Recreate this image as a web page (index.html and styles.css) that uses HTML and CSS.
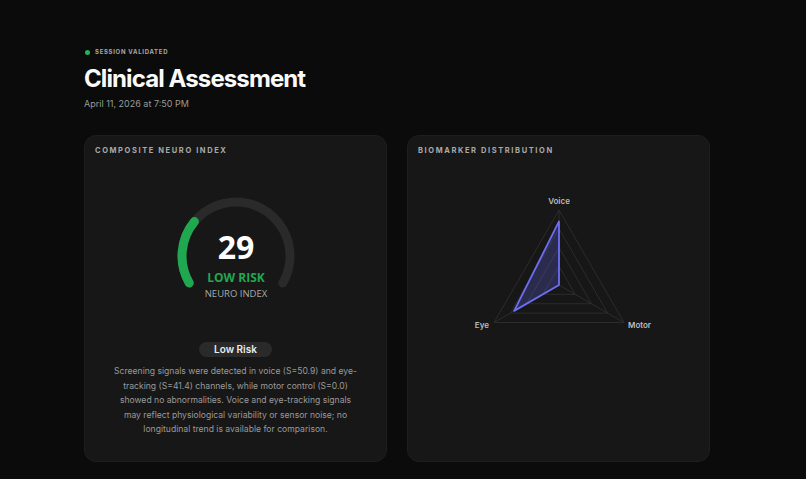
FILE: index.html
```html
<!DOCTYPE html>
<html lang="en-US">
<head>
	<meta charset="utf-8">
	<meta name="viewport" content="width=device-width, initial-scale=1.0">
	<link rel="stylesheet" href="styles.css">
</head>
<body>
	<main class="page">
		<header class="head">
			<div class="status"><span class="dot"></span>SESSION VALIDATED</div>
			<h1 class="title">Clinical Assessment</h1>
			<div class="date">April 11, 2026 at 7:50 PM</div>
		</header>

		<section class="cards">
			<div class="card">
				<h2 class="card-title">COMPOSITE NEURO INDEX</h2>
				<div class="card-body">
					<svg class="gauge" width="130" height="106" viewBox="0 0 130 106">
						<path class="gauge-track" d="M 18.23 89 A 54 54 0 1 1 111.77 89"/>
						<path class="gauge-value" d="M 18.23 89 A 54 54 0 0 1 23.4 27.6"/>
						<text class="gauge-num" x="65" y="64.5">29</text>
						<text class="gauge-risk" x="65" y="88">LOW RISK</text>
						<text class="gauge-label" x="65" y="102.5">NEURO INDEX</text>
					</svg>
					<span class="pill">Low Risk</span>
					<p class="summary">Screening signals were detected in voice (S=50.9) and eye-tracking (S=41.4) channels, while motor control (S=0.0) showed no abnormalities. Voice and eye-tracking signals may reflect physiological variability or sensor noise; no longitudinal trend is available for comparison.</p>
				</div>
			</div>

			<div class="card">
				<h2 class="card-title">BIOMARKER DISTRIBUTION</h2>
				<div class="card-body">
					<svg class="radar" width="200" height="145" viewBox="0 0 200 145">
						<g class="radar-grid">
							<polygon points="100,73.25 83.76,101.38 116.24,101.38"/>
							<polygon points="100,54.5 67.52,110.75 132.48,110.75"/>
							<polygon points="100,35.75 51.29,120.13 148.71,120.13"/>
							<polygon points="100,17 35.05,129.5 164.95,129.5"/>
							<line x1="100" y1="92" x2="100" y2="17"/>
							<line x1="100" y1="92" x2="35.05" y2="129.5"/>
							<line x1="100" y1="92" x2="164.95" y2="129.5"/>
						</g>
						<polygon class="radar-data" points="100,28.4 55.18,117.9 100,92"/>
						<text class="radar-label" x="100" y="11" text-anchor="middle">Voice</text>
						<text class="radar-label" x="30" y="135" text-anchor="end">Eye</text>
						<text class="radar-label" x="169" y="135">Motor</text>
					</svg>
				</div>
			</div>
		</section>
	</main>
</body>
</html>
```

FILE: styles.css
```css
html, body {
	margin: 0;
	background: #0b0b0b;
}
body {
	font-family: Inter, "Liberation Sans", sans-serif;
	color: #f2f2f2;
}
.page {
	padding: 47px 84px 0 84px;
	width: 626px;
}
.status {
	display: flex;
	align-items: center;
	gap: 5px;
	font-size: 6px;
	font-weight: 700;
	letter-spacing: 0.7px;
	color: #a8a8a8;
	line-height: 10px;
	padding-left: 1px;
}
.dot {
	width: 5px;
	height: 5px;
	border-radius: 50%;
	background: #22b45a;
}
.title {
	margin: 7px 0 0 0;
	font-size: 24px;
	font-weight: 700;
	letter-spacing: -0.9px;
	line-height: 30px;
	color: #fafafa;
}
.date {
	margin-top: 4px;
	font-size: 9px;
	color: #9a9a9a;
	line-height: 12px;
}
.cards {
	display: grid;
	grid-template-columns: 303px 303px;
	gap: 20px;
	margin-top: 25px;
}
.card {
	background: #171717;
	border: 1px solid #1e1e1e;
	border-radius: 12px;
	height: 315px;
	padding: 10px 10px 0 10px;
	box-sizing: content-box;
	width: 281px;
}
.card-title {
	margin: 0;
	font-size: 7.5px;
	font-weight: 700;
	letter-spacing: 1.6px;
	line-height: 10px;
	color: #a9a9a9;
}
.card-body {
	display: flex;
	flex-direction: column;
	align-items: center;
}
.gauge {
	margin-top: 38px;
}
.gauge-track, .gauge-value {
	fill: none;
	stroke-width: 9;
	stroke-linecap: round;
}
.gauge-track {
	stroke: #2a2a2a;
}
.gauge-value {
	stroke: #1fa84f;
}
.gauge text {
	font-family: "Open Sans", "Noto Sans", sans-serif;
	text-anchor: middle;
}
.gauge-num {
	font-size: 32px;
	font-weight: 700;
	fill: #ffffff;
}
.gauge-risk {
	font-size: 12px;
	font-weight: 700;
	fill: #1fa84f;
}
.gauge-label {
	font-size: 9.5px;
	fill: #a8a8a8;
}
.pill {
	margin-top: 42px;
	background: #2a2a2a;
	border-radius: 8px;
	padding: 0 15px;
	height: 15px;
	line-height: 15px;
	font-size: 10px;
	font-weight: 600;
	color: #ececec;
}
.summary {
	margin: 7px 0 0 0;
	width: 244px;
	text-align: center;
	font-size: 8.6px;
	line-height: 14.6px;
	color: #9a9a9a;
}
.radar {
	margin-top: 37px;
}
.radar-grid polygon, .radar-grid line {
	fill: none;
	stroke: #2c2c2c;
	stroke-width: 1;
}
.radar-data {
	fill: rgba(99, 102, 241, 0.25);
	stroke: #6c6ef4;
	stroke-width: 1.8;
	stroke-linejoin: round;
}
.radar-label {
	font-family: Inter, "Liberation Sans", sans-serif;
	font-size: 8px;
	font-weight: 600;
	fill: #bdbdbd;
}
```
